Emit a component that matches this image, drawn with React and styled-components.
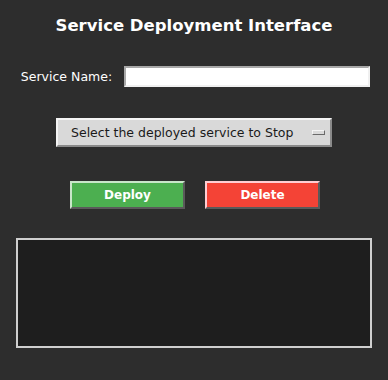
import React from 'react';
import styled, { createGlobalStyle } from 'styled-components';

const GlobalStyle = createGlobalStyle`
    html, body {
        margin: 0;
        padding: 0;
        background: #2d2d2d;
    }
    body {
        font-family: "DejaVu Sans", sans-serif;
    }
`;

const Window = styled.div`
    width: 388px;
    height: 380px;
    background: #2d2d2d;
    display: flex;
    flex-direction: column;
    align-items: center;
    box-sizing: border-box;
    padding-top: 16px;
`;

const Title = styled.h1`
    margin: 0;
    font-size: 16.5px;
    font-weight: bold;
    color: #ffffff;
    line-height: 19px;
`;

const Row = styled.div`
    display: flex;
    align-items: center;
    gap: ${p => p.gap || 0}px;
    margin-top: ${p => p.top || 0}px;
    margin-left: ${p => p.shift || 0}px;
`;

const Label = styled.label`
    color: #ffffff;
    font-size: 12.5px;
`;

const Entry = styled.input`
    width: 246px;
    height: 21px;
    box-sizing: border-box;
    background: #ffffff;
    border: 2px solid;
    border-color: #a8a8a8 #f0f0f0 #f0f0f0 #a8a8a8;
    outline: none;
    padding: 0 3px;
    font-family: "DejaVu Sans", sans-serif;
    font-size: 12px;
`;

const Menu = styled.div`
    width: 276px;
    height: 29px;
    box-sizing: border-box;
    background: #d9d9d9;
    border: 2px solid;
    border-color: #f4f4f4 #8a8a8a #8a8a8a #f4f4f4;
    display: flex;
    align-items: center;
    justify-content: space-between;
    padding: 0 4px 0 13px;
    color: #1a1a1a;
    font-size: 12.5px;
`;

const Indicator = styled.span`
    width: 11px;
    height: 3px;
    background: #d9d9d9;
    border: 1px solid;
    border-color: #f4f4f4 #6a6a6a #6a6a6a #f4f4f4;
    margin-right: 1px;
`;

const Button = styled.button`
    width: 115px;
    height: 28px;
    box-sizing: border-box;
    background: ${p => p.color};
    border: 2px solid;
    border-color: ${p => p.light} #5a5a5a #5a5a5a ${p => p.light};
    color: #ffffff;
    font-family: "DejaVu Sans", sans-serif;
    font-weight: bold;
    font-size: 12px;
    padding: 0;
`;

const Output = styled.div`
    width: 356px;
    height: 110px;
    box-sizing: border-box;
    margin-top: 29px;
    background: #1e1e1e;
    border: 2px solid #cfcfcf;
`;

export default function App() {
    return (
        <Window>
            <GlobalStyle />
            <Title>Service Deployment Interface</Title>
            <Row gap={12} top={31} shift={3}>
                <Label>Service Name:</Label>
                <Entry />
            </Row>
            <Row top={31}>
                <Menu>
                    <span>Select the deployed service to Stop</span>
                    <Indicator />
                </Menu>
            </Row>
            <Row gap={20} top={34} shift={2}>
                <Button color="#4caf50" light="#c8e6c9">Deploy</Button>
                <Button color="#f44336" light="#ffcdd2">Delete</Button>
            </Row>
            <Output />
        </Window>
    );
}
